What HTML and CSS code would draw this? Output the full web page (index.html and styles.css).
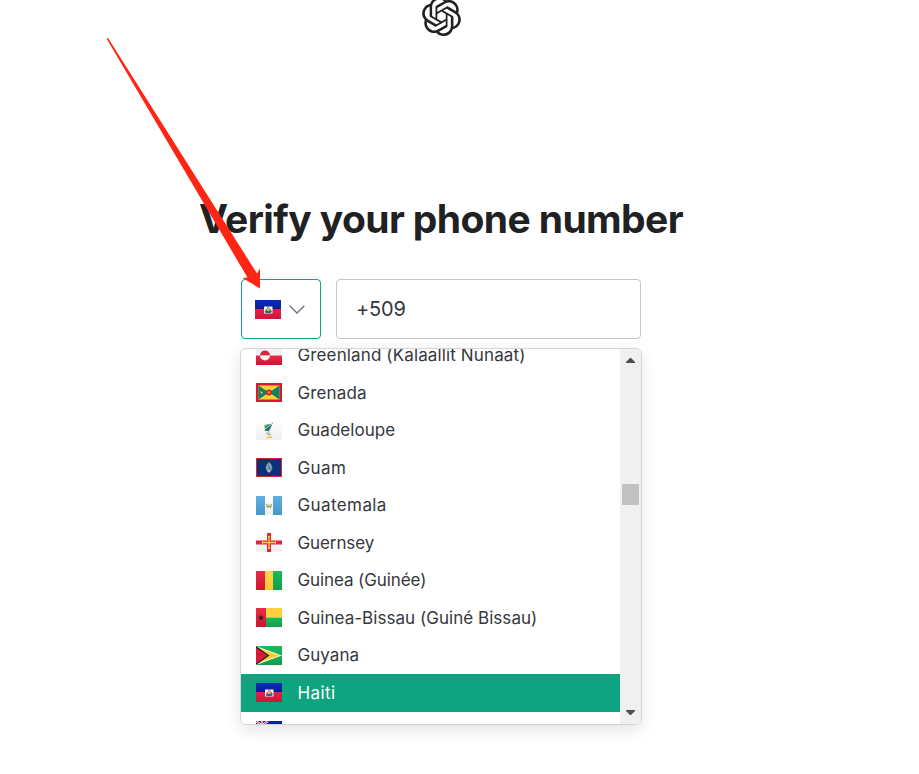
FILE: index.html
```html
<!DOCTYPE html>
<html lang="en">
<head>
<meta charset="utf-8">
<title>Verify your phone number</title>
<link rel="stylesheet" href="styles.css">
</head>
<body>
<main class="page">
  <svg class="logo" viewBox="0 0 24 24"><path fill="currentColor" d="M22.2819 9.8211a5.9847 5.9847 0 0 0-.5157-4.9108 6.0462 6.0462 0 0 0-6.5098-2.9A6.0651 6.0651 0 0 0 4.9807 4.1818a5.9847 5.9847 0 0 0-3.9977 2.9 6.0462 6.0462 0 0 0 .7427 7.0966 5.98 5.98 0 0 0 .511 4.9107 6.051 6.051 0 0 0 6.5146 2.9001A5.9847 5.9847 0 0 0 13.2599 24a6.0557 6.0557 0 0 0 5.7718-4.2058 5.9894 5.9894 0 0 0 3.9977-2.9001 6.0557 6.0557 0 0 0-.7475-7.0729zm-9.022 12.6081a4.4755 4.4755 0 0 1-2.8764-1.0408l.1419-.0804 4.7783-2.7582a.7948.7948 0 0 0 .3927-.6813v-6.7369l2.02 1.1686a.071.071 0 0 1 .038.052v5.5826a4.504 4.504 0 0 1-4.4945 4.4944zm-9.6607-4.1254a4.4708 4.4708 0 0 1-.5346-3.0137l.142.0852 4.783 2.7582a.7712.7712 0 0 0 .7806 0l5.8428-3.3685v2.3324a.0804.0804 0 0 1-.0332.0615L9.74 19.9502a4.4992 4.4992 0 0 1-6.1408-1.6464zM2.3408 7.8956a4.485 4.485 0 0 1 2.3655-1.9728V11.6a.7664.7664 0 0 0 .3879.6765l5.8144 3.3543-2.0201 1.1685a.0757.0757 0 0 1-.071 0l-4.8303-2.7865A4.504 4.504 0 0 1 2.3408 7.872zm16.5963 3.8558L13.1038 8.364 15.1192 7.2a.0757.0757 0 0 1 .071 0l4.8303 2.7913a4.4944 4.4944 0 0 1-.6765 8.1042v-5.6772a.79.79 0 0 0-.407-.667zm2.0107-3.0231l-.142-.0852-4.7735-2.7818a.7759.7759 0 0 0-.7854 0L9.409 9.2297V6.8974a.0662.0662 0 0 1 .0284-.0615l4.8303-2.7866a4.4992 4.4992 0 0 1 6.6802 4.66zM8.3065 12.863l-2.02-1.1638a.0804.0804 0 0 1-.038-.0567V6.0742a4.4992 4.4992 0 0 1 7.3757-3.4537l-.142.0805L8.704 5.459a.7948.7948 0 0 0-.3927.6813zm1.0976-2.3654l2.602-1.4998 2.6069 1.4998v2.9994l-2.5974 1.4997-2.6067-1.4997Z"/></svg>
  <h1 class="title">Verify your phone number</h1>
  <div class="fields">
    <div class="country">
      <svg class="flag" viewBox="0 0 26 19"><use href="#haiti"/></svg>
      <svg class="chevron" viewBox="0 0 16 9"><path d="M.7.7 8 8 15.3.7"/></svg>
    </div>
    <div class="phone">+509</div>
  </div>
  <div class="menu">
    <ul class="list">
      <li class="row"><svg class="flag" viewBox="0 0 26 19"><path fill="#f2f2f2" d="M0 0h26v9.500H0z"/><path fill="url(#red)" d="M0 9.500h26V19H0z"/><path fill="#dc2440" d="M4 9.500a5 5 0 0 1 10 0z"/><path fill="#f4f4f4" d="M4 9.500a5 5 0 0 0 10 0z"/></svg><span class="loose">Greenland (Kalaallit Nunaat)</span></li>
      <li class="row"><svg class="flag" viewBox="0 0 26 19"><path fill="#d71a32" d="M0 0h26v19H0z"/><path fill="#fbd42d" d="M2.500 2.500h21v14h-21z"/><path fill="#128066" d="M2.500 2.500 13 9.500l-10.500 7zM23.500 2.500 13 9.500l10.500 7z"/><circle cx="13" cy="9.500" r="2.900" fill="#d71a32"/><circle cx="13" cy="9.500" r="1.300" fill="#ef9235"/><path fill="#e6cf32" d="m4 8 3 1.500L5.500 11z"/></svg><span class="loose">Grenada</span></li>
      <li class="row"><svg class="flag" viewBox="0 0 26 19"><path fill="url(#white)" d="M0 0h26v19H0z"/><path fill="#31945b" d="m8.500 4 5.500-1 2 1-3 6.500-4-1z"/><path fill="#2a5e8e" d="m9 8.500 8.500-7.500-5 8-3 1z"/><path fill="#e7c62e" d="m9 4 2-1-1 2zM11 15.500h5v1.500h-5z"/><path fill="#a3aaa5" d="M10 11.500h4v1h-4zm1 1.500h4v1h-4z"/><path stroke="#f2f4f4" stroke-width=".7" d="m9 8 7-5"/></svg><span>Guadeloupe</span></li>
      <li class="row"><svg class="flag" viewBox="0 0 26 19"><path fill="#d9223d" d="M0 0h26v19H0z"/><path fill="#08327d" d="M1 1h24v17H1z"/><path fill="#68b5e1" stroke="#c65b70" stroke-width=".8" d="M13 4.200q6 5.300 0 10.600-6-5.300 0-10.600z"/><path fill="#e4d159" d="m11 13 4-1-2 2.500z"/><path stroke="#376d63" d="m12.500 7 1.500 5"/></svg><span class="wide">Guam</span></li>
      <li class="row"><svg class="flag" viewBox="0 0 26 19"><path fill="url(#white)" d="M0 0h26v19H0z"/><path fill="url(#sky)" d="M0 0h9v19H0zM17 0h9v19h-9z"/><path fill="none" stroke="#8ca55c" stroke-width="1.200" d="m10.500 8 1 3.300 1.500-1 1.500 1 1-3.300"/><path stroke="#d2b75a" d="M13 7.500V10"/></svg><span class="wide">Guatemala</span></li>
      <li class="row"><svg class="flag" viewBox="0 0 26 19"><path fill="url(#white)" d="M0 0h26v19H0z"/><path fill="#e52340" d="M0 7.500h11V0h4v7.500h11v4H15V19h-4v-7.500H0z"/><path fill="#f9cf36" d="M6 8l1.500.8h4.800V4l-.8-1h3l-.8 1v4.800h4.800L20 8v3l-1.500-.8h-4.800V15l.8 1h-3l.8-1v-4.800H7.500L6 11z"/></svg><span class="narrow">Guernsey</span></li>
      <li class="row"><svg class="flag" viewBox="0 0 26 19"><path fill="url(#red)" d="M0 0h9v19H0z"/><path fill="url(#yellow)" d="M9 0h8v19H9z"/><path fill="url(#green)" d="M17 0h9v19h-9z"/></svg><span class="narrow">Guinea (Guinée)</span></li>
      <li class="row"><svg class="flag" viewBox="0 0 26 19"><path fill="url(#red)" d="M0 0h10v19H0z"/><path fill="#fcd13b" d="M10 0h16v9.500H10z"/><path fill="url(#green)" d="M10 9.500h16V19H10z"/><path fill="#331b1c" d="m5 6.500.8 2.200h2.300l-1.900 1.400.7 2.300L5 11l-1.900 1.400.7-2.300-1.900-1.400h2.300z"/></svg><span>Guinea-Bissau (Guiné Bissau)</span></li>
      <li class="row"><svg class="flag" viewBox="0 0 26 19"><path fill="url(#green)" d="M0 0h26v19H0z"/><path fill="#f5f6e8" d="m0 0 26 9.500L0 19z"/><path fill="#fbce2e" d="m0 1.200 23.500 8.300L0 17.800z"/><path fill="#241f20" d="m0 0 13.500 9.500L0 19z"/><path fill="#d71b35" d="m0 1.600 11.500 7.900L0 17.400z"/></svg><span>Guyana</span></li>
      <li class="row selected"><svg class="flag" viewBox="0 0 26 19"><use href="#haiti"/></svg><span class="wide">Haiti</span></li>
      <li class="row"><svg class="flag" viewBox="0 0 26 19"><path fill="#07209b" d="M0 0h26v19H0z"/><path stroke="#fff" stroke-width="2.200" d="m0 0 12 9M12 0 0 9M6 0v9M0 4.500h12"/><path stroke="#d62945" stroke-width="1" d="m0 0 12 9M12 0 0 9M6 0v9M0 4.500h12"/></svg></li>
    </ul>
    <div class="scrollbar">
      <svg class="tick" viewBox="0 0 9 5"><path d="M0 5V4l4-4h1l4 4v1z"/></svg>
      <div class="thumb"></div>
      <svg class="tick" viewBox="0 0 9 5"><path d="M0 0v1l4 4h1l4-4V0z"/></svg>
    </div>
  </div>
</main>
<svg class="arrow" viewBox="0 0 919 774"><path d="M106.500 38.500 108 38 257 273.500 260 268.500V288.500L242.500 278 247.500 277.500Z"/></svg>
<svg class="defs">
  <defs>
    <linearGradient id="red" x2="0" y2="1"><stop stop-color="#e92b45"/><stop offset="1" stop-color="#ca1731"/></linearGradient>
    <linearGradient id="green" x2="0" y2="1"><stop stop-color="#17bd5a"/><stop offset="1" stop-color="#159c4b"/></linearGradient>
    <linearGradient id="yellow" x2="0" y2="1"><stop stop-color="#ffd64a"/><stop offset="1" stop-color="#fccb30"/></linearGradient>
    <linearGradient id="sky" x2="0" y2="1"><stop stop-color="#62aee2"/><stop offset="1" stop-color="#4895cd"/></linearGradient>
    <linearGradient id="white" x2="0" y2="1"><stop stop-color="#fff"/><stop offset="1" stop-color="#eee"/></linearGradient>
    <linearGradient id="blue" x2="0" y2="1"><stop stop-color="#0a2cb8"/><stop offset="1" stop-color="#071c98"/></linearGradient>
    <linearGradient id="crimson" x2="0" y2="1"><stop stop-color="#e6204a"/><stop offset="1" stop-color="#cf1537"/></linearGradient>
    <g id="haiti"><path fill="url(#blue)" d="M0 0h26v9.500H0z"/><path fill="url(#crimson)" d="M0 9h26v10H0z"/><path fill="#f3f3ed" d="M9 6.500h8.500v7H9z"/><path fill="#46725e" d="m9.500 12 2-3h4l1.500 3-2 1h-4z"/><path fill="#d3c35e" d="M12 9h2.500v2H12z"/><path fill="#3b4c75" d="M10.500 11.500h5.500v1h-5.500z"/><path fill="#455d45" d="M12 7.500h2.500v1H12z"/></g>
  </defs>
</svg>
</body>
</html>
```
FILE: styles.css
```css
* { box-sizing: border-box; }
body {
  margin: 0;
  height: 774px;
  overflow: hidden;
  background: #fff;
  color: #202123;
  font-family: Inter, "Liberation Sans", sans-serif;
}
.page {
  width: 882px;
  display: flex;
  flex-direction: column;
  align-items: center;
}
.logo { width: 39px; height: 39px; margin: -3.5px 0 0; flex: none; }
.title {
  margin: 158.5px 0 0;
  height: 50px;
  line-height: 50px;
  font-size: 39px;
  font-weight: 650;
  letter-spacing: -.6px;
  white-space: nowrap;
}
.fields { display: flex; gap: 15px; width: 400px; height: 60px; margin-top: 35px; }
.country {
  width: 80px;
  display: flex;
  align-items: center;
  gap: 8px;
  padding: 1px 0 0 13px;
  border: 1px solid #10a37f;
  border-radius: 4px;
}
.flag { width: 26px; height: 19px; flex: none; display: block; }
.chevron { width: 16px; height: 9px; margin-top: -1px; fill: none; stroke: #6e6e80; stroke-width: 1.3; }
.phone {
  flex: 1;
  padding-left: 19px;
  border: 1px solid #c5c5d2;
  border-radius: 4px;
  line-height: 58px;
  font-size: 20px;
  letter-spacing: -.2px;
  color: #353740;
}
.menu {
  display: flex;
  width: 402px;
  height: 377px;
  margin-top: 9px;
  overflow: hidden;
  border: 1px solid #d5d5d5;
  border-radius: 6px;
  box-shadow: 0 5px 16px rgba(0, 0, 0, .11);
}
.list { flex: 1; margin: -12.25px 0 0; padding: 0; list-style: none; }
.row {
  display: flex;
  align-items: center;
  gap: 15.5px;
  height: 37.5px;
  padding: 0 0 .9px 15px;
  font-size: 17px;
  letter-spacing: .04px;
  white-space: nowrap;
  color: #353740;
}
.loose { letter-spacing: .13px; }
.wide { letter-spacing: .4px; }
.narrow { letter-spacing: -.1px; }
.selected { background: #10a37f; color: #fff; }
.scrollbar {
  width: 21px;
  display: flex;
  flex-direction: column;
  align-items: center;
  padding: 9px 0;
  background: #f0f0f0;
}
.tick { width: 9px; height: 5px; fill: #505050; }
.thumb { width: 17px; height: 21px; margin: 121px 0 205px; background: #c1c1c1; }
.arrow { position: absolute; left: 0; top: 0; width: 919px; height: 774px; fill: #ff2515; }
.defs { position: absolute; width: 0; height: 0; }
```
